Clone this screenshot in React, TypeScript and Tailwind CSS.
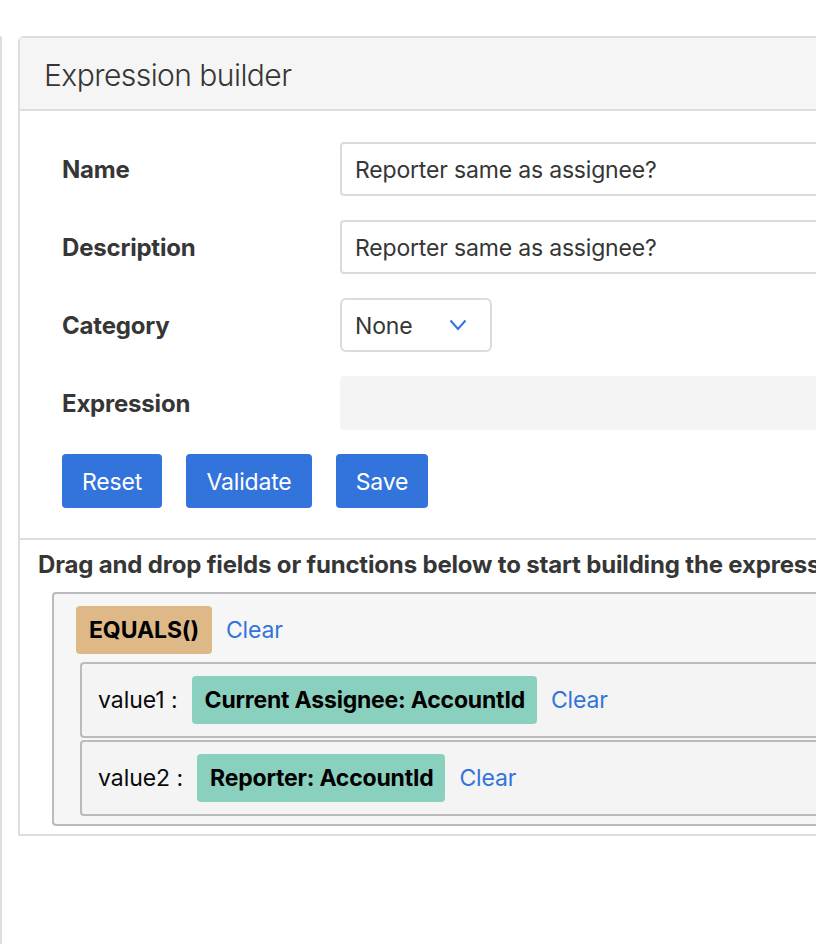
const Field = ({ label, children }: { label: string; children: React.ReactNode }) => (
  <div className="flex items-center h-[54px]">
    <label className="w-[278px] shrink-0 pt-[2px] text-[24px] font-bold tracking-[-0.2px] text-[#363636]">{label}</label>
    {children}
  </div>
);

const Clear = () => <a className="text-[23px] tracking-[-0.18px] text-[#3273dc]">Clear</a>;

const Chip = ({ text }: { text: string }) => (
  <span className="h-[48px] pl-[13px] pr-[12px] flex items-center rounded-[4px] bg-[#8ad0bf] text-[23px] font-bold tracking-[-0.2px] text-black whitespace-nowrap">
    {text}
  </span>
);

const ValueRow = ({ name, text }: { name: string; text: string }) => (
  <div className="h-[76px] flex items-center pl-[16px] border-2 border-r-0 border-[#bbbbbb] rounded-l-[4px] bg-[#f4f4f4]">
    <span className="text-[23px] tracking-[-0.05px] text-[#0a0a0a] mr-[14px] whitespace-nowrap">{name} :</span>
    <Chip text={text} />
    <span className="ml-[14px]"><Clear /></span>
  </div>
);

export default function App() {
  return (
    <div className="w-[816px] h-[944px] overflow-hidden bg-white pt-[36px] flex font-['Inter',sans-serif]">
      <div className="w-[2px] h-[908px] shrink-0 bg-[#dddddd] rounded-tr-[2px]" />
      <div className="ml-[16px] w-[1000px] h-[800px] shrink-0 border-2 border-[#dddddd] rounded-tl-[6px]">
        <div className="h-[73px] flex items-center pl-[24px] pt-[4px] bg-[#f5f5f5] border-b-2 border-[#dddddd]">
          <h2 className="text-[30px] font-light tracking-[-0.55px] text-[#363636]">Expression builder</h2>
        </div>

        <div className="pt-[31px] pl-[42px] flex flex-col gap-[24px]">
          <Field label="Name">
            <div className="w-[700px] h-[54px] flex items-center pl-[13px] pt-[2px] bg-white border-2 border-[#dbdbdb] rounded-[4px] text-[23px] tracking-[-0.18px] text-[#363636]">
              Reporter same as assignee?
            </div>
          </Field>
          <Field label="Description">
            <div className="w-[700px] h-[54px] flex items-center pl-[13px] pt-[2px] bg-white border-2 border-[#dbdbdb] rounded-[4px] text-[23px] tracking-[-0.18px] text-[#363636]">
              Reporter same as assignee?
            </div>
          </Field>
          <Field label="Category">
            <div className="w-[152px] h-[54px] flex items-center justify-between pl-[13px] pr-[23px] bg-white border-2 border-[#dbdbdb] rounded-[6px] text-[23px] tracking-[-0.18px] text-[#363636]">
              <span className="pt-[2px]">None</span>
              <svg viewBox="0 0 18 12" className="w-[18px] h-[12px] text-[#3273dc]" fill="none" stroke="currentColor" strokeWidth="2">
                <path d="M1.5 1.5 L9 10 L16.5 1.5" />
              </svg>
            </div>
          </Field>
          <Field label="Expression">
            <div className="w-[700px] h-[54px] bg-[#f4f4f4] rounded-[4px]" />
          </Field>
          <div className="flex gap-[24px]">
            <button className="w-[100px] h-[54px] pt-[2px] rounded-[4px] bg-[#3273dc] text-[23px] tracking-[-0.18px] text-white">Reset</button>
            <button className="w-[126px] h-[54px] pt-[2px] rounded-[4px] bg-[#3273dc] text-[23px] tracking-[-0.18px] text-white">Validate</button>
            <button className="w-[92px] h-[54px] pt-[2px] rounded-[4px] bg-[#3273dc] text-[23px] tracking-[-0.18px] text-white">Save</button>
          </div>
        </div>

        <div className="mt-[30px] border-t-2 border-[#dddddd] pl-[18px]">
          <p className="h-[52px] pb-[2px] flex items-center text-[24px] font-bold tracking-[-0.17px] text-[#363636] whitespace-nowrap">
            Drag and drop fields or functions below to start building the expression
          </p>
          <div className="ml-[14px] h-[234px] pt-[12px] pl-[22px] border-2 border-r-0 border-[#bbbbbb] rounded-l-[4px] bg-[#f6f6f6]">
            <div className="flex items-center h-[48px]">
              <span className="h-[48px] px-[13px] flex items-center rounded-[4px] bg-[#deb887] text-[23px] font-bold tracking-[-0.1px] text-black">
                EQUALS()
              </span>
              <span className="ml-[14px]"><Clear /></span>
            </div>
            <div className="mt-[8px] ml-[4px] flex flex-col gap-[2px]">
              <ValueRow name="value1" text="Current Assignee: AccountId" />
              <ValueRow name="value2" text="Reporter: AccountId" />
            </div>
          </div>
        </div>
      </div>
    </div>
  );
}
